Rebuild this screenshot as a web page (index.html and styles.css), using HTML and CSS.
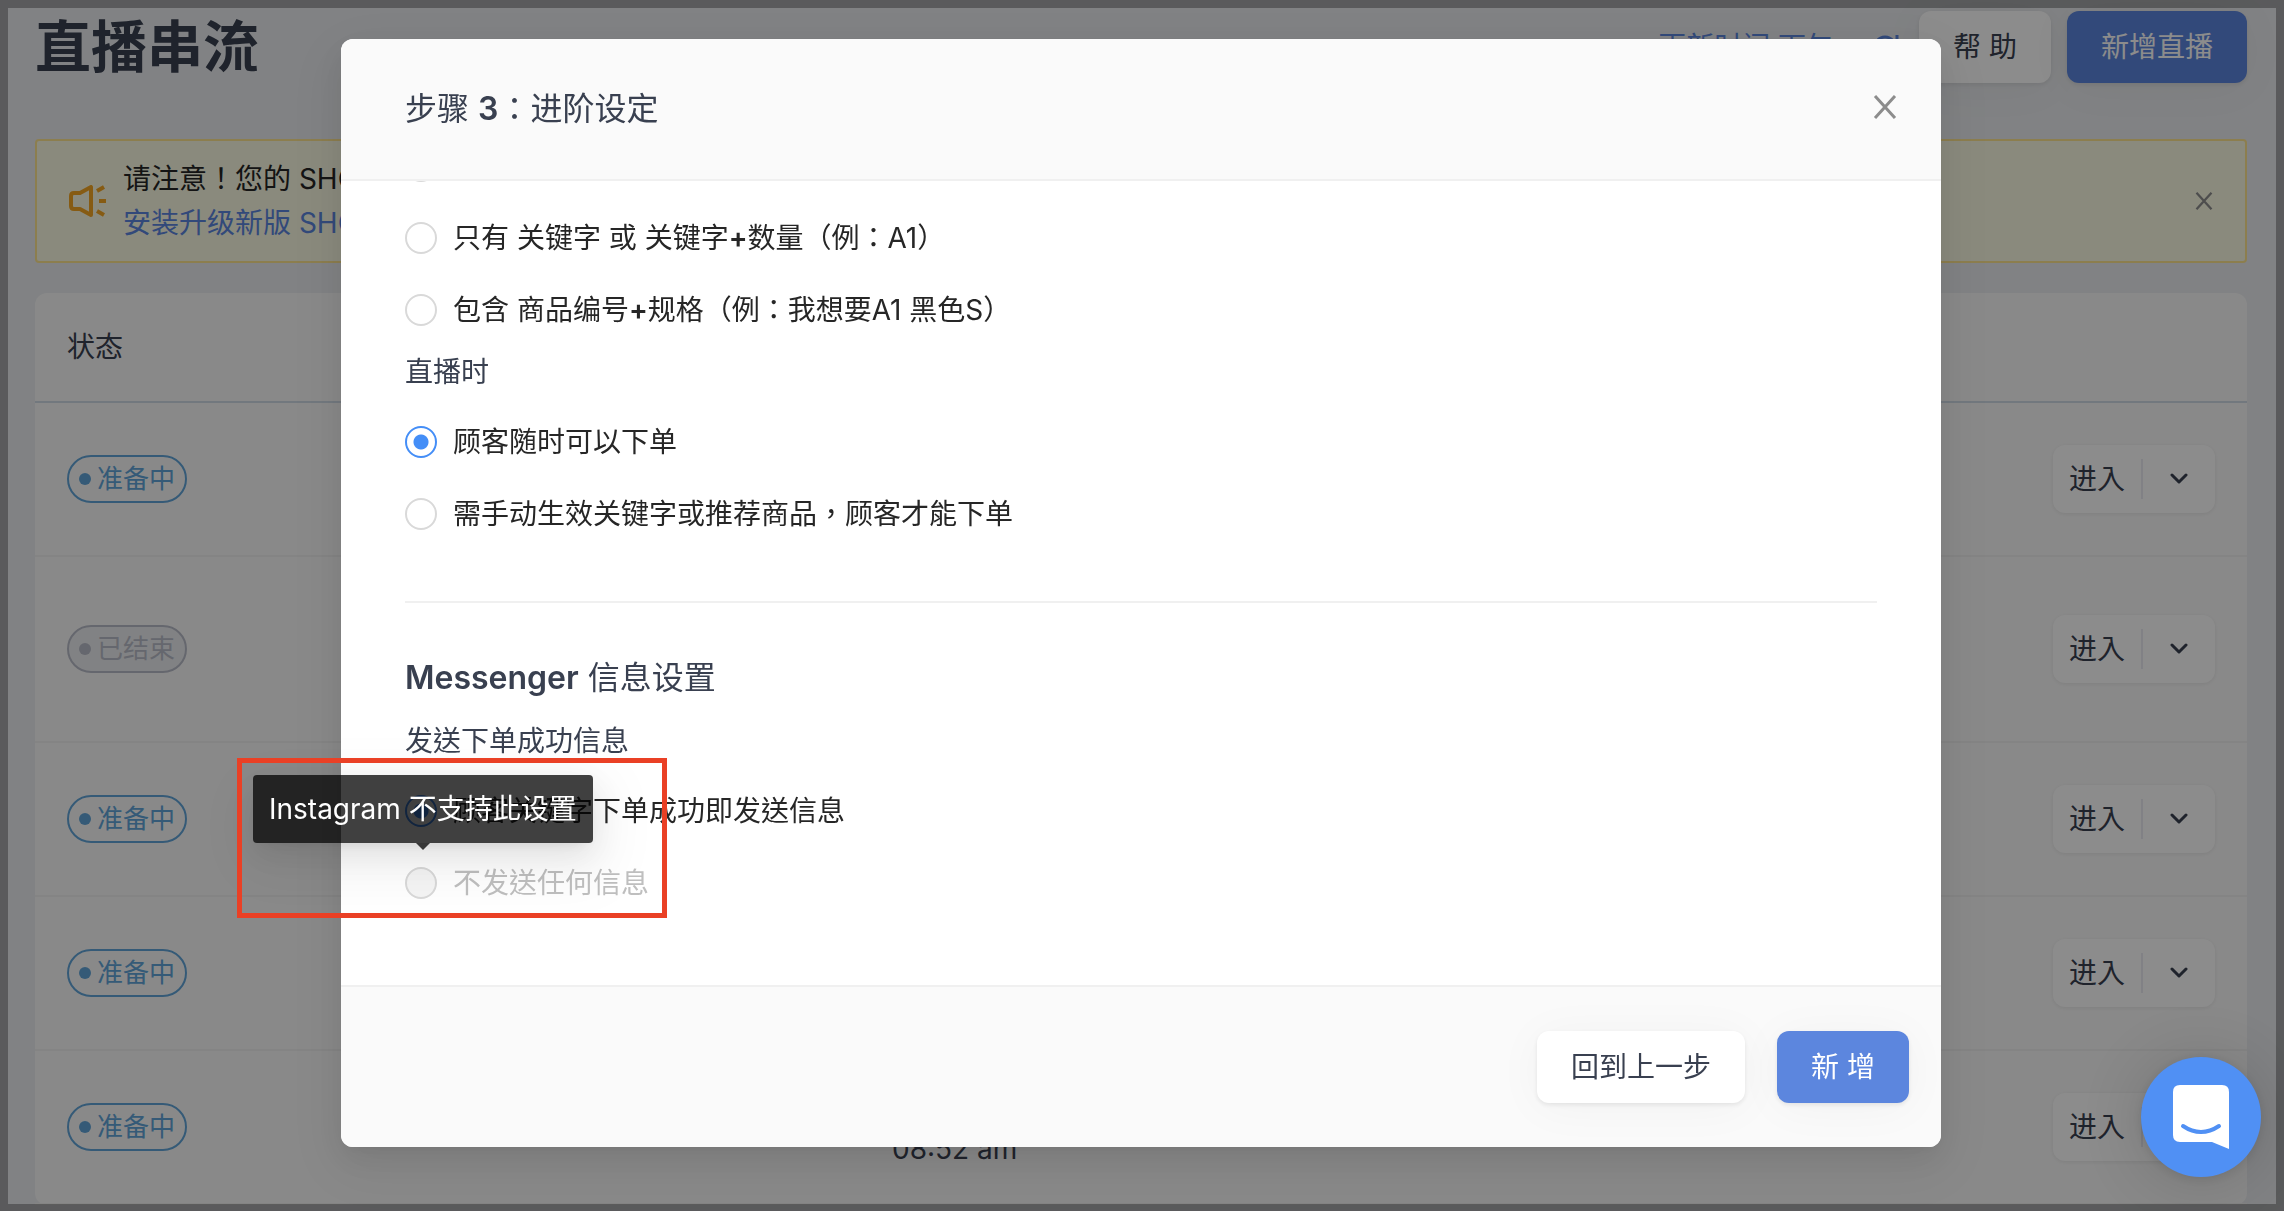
FILE: index.html
```
<!DOCTYPE html>
<html lang="zh-Hant">
<head>
  <meta charset="UTF-8">
  <title>直播串流</title>
  <link rel="stylesheet" href="styles.css">
</head>
<body>

<div class="page">
  <header class="topbar">
    <h1 class="title">直播串流</h1>
    <a class="updated" href="#">更新时间 下午
      <svg class="reload" viewBox="0 0 28 28"><path d="M21 8A10 10 0 1 0 23 15M25 2v9h-8"/></svg>
    </a>
    <button class="btn">帮 助</button>
    <button class="btn primary">新增直播</button>
  </header>

  <div class="notice">
    <svg class="horn" viewBox="0 0 38 32"><path d="M2 11q0-3 3-3h6L22 2v28L11 24H5q-3 0-3-3zM28 6l7-4M30 16h7M28 26l7 4"/></svg>
    <div class="notice-text">
      <div>请注意！您的 SHOPLINE</div>
      <a href="#">安装升级新版 SHOPLINE</a>
    </div>
    <button class="close small" aria-label="关闭"><svg viewBox="0 0 24 24"><path d="M2 1l20 22M22 1L2 23"/></svg></button>
  </div>

  <table class="streams">
    <thead>
      <tr><th>状态</th><th></th><th></th></tr>
    </thead>
    <tbody>
      <tr>
        <td><span class="tag">准备中</span></td>
        <td></td>
        <td><div class="split"><button>进入</button><button aria-label="更多"><svg viewBox="0 0 18 12"><path d="M2 2l7 7 7-7"/></svg></button></div></td>
      </tr>
      <tr class="tall">
        <td><span class="tag ended">已结束</span></td>
        <td></td>
        <td><div class="split"><button>进入</button><button aria-label="更多"><svg viewBox="0 0 18 12"><path d="M2 2l7 7 7-7"/></svg></button></div></td>
      </tr>
      <tr>
        <td><span class="tag">准备中</span></td>
        <td></td>
        <td><div class="split"><button>进入</button><button aria-label="更多"><svg viewBox="0 0 18 12"><path d="M2 2l7 7 7-7"/></svg></button></div></td>
      </tr>
      <tr>
        <td><span class="tag">准备中</span></td>
        <td></td>
        <td><div class="split"><button>进入</button><button aria-label="更多"><svg viewBox="0 0 18 12"><path d="M2 2l7 7 7-7"/></svg></button></div></td>
      </tr>
      <tr>
        <td><span class="tag">准备中</span></td>
        <td class="time">08:52 am</td>
        <td><div class="split"><button>进入</button><button aria-label="更多"><svg viewBox="0 0 18 12"><path d="M2 2l7 7 7-7"/></svg></button></div></td>
      </tr>
    </tbody>
  </table>
</div>

<div class="mask">
  <div class="modal" role="dialog" aria-labelledby="modal-title">
    <div class="modal-head">
      <h2 id="modal-title">步骤 <b>3</b>：进阶设定</h2>
      <button class="close" aria-label="关闭"><svg viewBox="0 0 24 24"><path d="M2 1l20 22M22 1L2 23"/></svg></button>
    </div>
    <div class="modal-body">
      <form class="scrolled">
        <label class="option"><input type="radio" name="match" aria-label="关键字"></label>
        <label class="option"><input type="radio" name="match"><span>只有 关键字 或 关键字<b>+</b>数量（例：A1）</span></label>
        <label class="option"><input type="radio" name="match"><span>包含 商品编号<b>+</b>规格（例：我想要A1 黑色S）</span></label>
        <p class="field">直播时</p>
        <label class="option"><input type="radio" name="live" checked><span>顾客随时可以下单</span></label>
        <label class="option"><input type="radio" name="live"><span>需手动生效关键字或推荐商品，顾客才能下单</span></label>
        <hr>
        <h2><b>Messenger</b> 信息设置</h2>
        <p class="field">发送下单成功信息</p>
        <label class="option"><input type="radio" name="message" checked><span>顾客关键字下单成功即发送信息</span></label>
        <label class="option"><input type="radio" name="message" disabled><span>不发送任何信息</span></label>
      </form>
    </div>
    <div class="modal-foot">
      <button class="btn">回到上一步</button>
      <button class="btn primary">新 增</button>
    </div>
    <div class="tooltip" role="tooltip">Instagram 不支持此设置</div>
    <div class="highlight"></div>
  </div>
</div>

<button class="chat" aria-label="聊天">
  <svg viewBox="0 0 56 64"><path fill="#fff" d="M7 0h42q7 0 7 7v57l-17-7H7q-7 0-7-7V7q0-7 7-7z"/><path fill="none" stroke="#5090f4" stroke-width="4" stroke-linecap="round" d="M10 41q18 12 36 0"/></svg>
</button>
<div class="frame"></div>

</body>
</html>
```
FILE: styles.css
```
* {
  box-sizing: border-box;
}
body {
  margin: 0;
  height: 100vh;
  overflow: hidden;
  background: #ebedf0;
  color: #394050;
  font: 28px/44px Inter, "Noto Sans CJK TC", sans-serif;
}
h1, h2, p {
  margin: 0;
}
h2 {
  font-size: 32px;
  line-height: 48px;
  font-weight: 400;
}
b {
  font-weight: 600;
}
a {
  color: #5c86de;
  text-decoration: none;
}
button {
  font: inherit;
  color: inherit;
  border: 0;
  padding: 0;
  background: none;
  cursor: pointer;
}
svg {
  display: block;
}
.page {
  padding: 11px 37px 0 35px;
}

/* top bar */
.topbar {
  display: flex;
  align-items: center;
  gap: 16px;
  height: 72px;
}
.title {
  font-size: 56px;
  font-weight: 700;
  line-height: 72px;
  margin-right: auto;
}
.updated {
  display: flex;
  align-items: center;
  gap: 68px;
  gap: 38px;
  margin-right: 3px;
}
.reload {
  width: 28px;
  height: 28px;
  fill: none;
  stroke: #5c86de;
  stroke-width: 3;
}
.btn {
  height: 72px;
  padding: 0 34px;
  border-radius: 12px;
  background: #fff;
  box-shadow: 0 2px 4px rgba(0, 0, 0, .08), 0 4px 48px rgba(0, 0, 0, .04);
}
.btn.primary {
  background: #5c86de;
  color: #fff;
}

/* notice */
.notice {
  display: flex;
  align-items: center;
  gap: 16px;
  height: 124px;
  margin: 56px 0 30px;
  padding: 0 32px;
  border: 2px solid #ffe58f;
  border-radius: 4px;
  background: #fbfbe4;
  color: #262626;
}
.notice-text {
  flex: 1;
}
.notice-text a {
  display: block;
}
.horn {
  width: 38px;
  height: 32px;
  fill: none;
  stroke: #f5a623;
  stroke-width: 4;
  stroke-linejoin: round;
}
.close svg {
  width: 24px;
  height: 24px;
  fill: none;
  stroke: #8c8c8c;
  stroke-width: 3;
}
.close.small svg {
  width: 18px;
  height: 18px;
}

/* stream list */
.streams {
  width: 100%;
  border-spacing: 0;
  border-radius: 12px;
  background: #fafafa;
  table-layout: fixed;
}
.streams th {
  height: 110px;
  padding: 0 32px;
  font-weight: 400;
  text-align: left;
  border-bottom: 2px solid #d0dbe6;
}
.streams th:first-child {
  width: 714px;
}
.streams td {
  height: 154px;
  padding: 0 32px;
  border-bottom: 2px solid #f0f0f0;
}
.streams .tall td {
  height: 186px;
}
.streams .time {
  padding: 44px 0 0 143px;
}
.tag {
  display: inline-flex;
  align-items: center;
  gap: 6px;
  height: 48px;
  padding: 0 10px;
  border: 2px solid #61a5d9;
  border-radius: 24px;
  color: #61a5d9;
  font-size: 26px;
  vertical-align: middle;
}
.tag::before {
  content: "";
  width: 12px;
  height: 12px;
  border-radius: 50%;
  background: #61a5d9;
}
.tag.ended {
  border-color: #b9bcc8;
  color: #b9bcc8;
  background: #ebedf0;
}
.tag.ended::before {
  background: #b9bcc8;
}
.split {
  display: flex;
  align-items: center;
  width: 162px;
  height: 68px;
  margin-left: auto;
  border-radius: 12px;
  background: #fff;
  box-shadow: 0 1px 4px rgba(0, 0, 0, .08);
}
.split button {
  flex: 1;
  height: 40px;
  line-height: 40px;
}
.split button:first-child {
  flex: 0 0 90px;
  border-right: 2px solid #ebebf2;
}
.split svg {
  width: 18px;
  height: 12px;
  margin: auto;
  fill: none;
  stroke: #394050;
  stroke-width: 3;
  stroke-linecap: round;
  stroke-linejoin: round;
}

/* modal */
.mask {
  position: fixed;
  inset: 0;
  display: flex;
  justify-content: center;
  align-items: flex-start;
  padding-top: 39px;
  background: rgba(0, 0, 0, .45);
}
.modal {
  position: relative;
  width: 90%;
  max-width: 1600px;
  margin-right: 2px;
  border-radius: 12px;
  background: #fff;
  box-shadow: 0 6px 12px -8px rgba(0, 0, 0, .12), 0 12px 32px rgba(0, 0, 0, .08), 0 18px 56px 16px rgba(0, 0, 0, .05);
}
.modal-head {
  display: flex;
  align-items: center;
  justify-content: space-between;
  height: 142px;
  padding: 0 44px 0 64px;
  border-bottom: 2px solid #f0f0f0;
  border-radius: 12px 12px 0 0;
  background: #fafafa;
}
.modal-head .close {
  padding-bottom: 4px;
}
.modal-body {
  padding: 0 64px 66px;
  overflow: hidden;
}
.scrolled {
  margin-top: -51px;
}
.option {
  display: flex;
  align-items: center;
  gap: 16px;
  height: 72px;
  color: #262626;
}
.option input {
  appearance: none;
  width: 32px;
  height: 32px;
  margin: 0;
  border: 2px solid #d9d9d9;
  border-radius: 50%;
  background: #fff;
}
.option input:checked {
  border-color: #448ef7;
  background: radial-gradient(#448ef7 7px, #fff 8px);
}
.option input:disabled {
  background: #f5f5f5;
}
.option input:disabled + span {
  color: #bfbfbf;
}
.field {
  padding: 4px 0 12px;
}
hr {
  height: 2px;
  margin: 51px 0;
  border: 0;
  background: #f0f0f0;
}
.scrolled h2 {
  margin-bottom: 13px;
}
.modal-foot {
  display: flex;
  align-items: center;
  justify-content: flex-end;
  gap: 32px;
  height: 162px;
  padding: 0 32px;
  border-top: 2px solid #f0f0f0;
  border-radius: 0 0 12px 12px;
  background: #fafafa;
}

/* over the modal */
.tooltip {
  position: absolute;
  left: -88px;
  bottom: 304px;
  padding: 12px 16px;
  border-radius: 4px;
  background: rgba(0, 0, 0, .75);
  color: #fff;
  white-space: nowrap;
  box-shadow: 0 6px 12px -8px rgba(0, 0, 0, .12), 0 12px 32px rgba(0, 0, 0, .08), 0 18px 56px 16px rgba(0, 0, 0, .05);
}
.tooltip::after {
  content: "";
  position: absolute;
  left: 50%;
  top: 100%;
  margin-left: -7px;
  border: 7px solid transparent;
  border-top-color: rgba(0, 0, 0, .75);
  border-bottom: 0;
}
.highlight {
  position: absolute;
  left: -104px;
  bottom: 229px;
  width: 430px;
  height: 160px;
  border: 5px solid #ea4025;
}
.chat {
  position: fixed;
  right: 23px;
  bottom: 34px;
  width: 120px;
  height: 120px;
  border-radius: 50%;
  background: #5090f4;
  box-shadow: 0 2px 12px rgba(0, 0, 0, .1), 0 4px 64px rgba(0, 0, 0, .16);
}
.chat svg {
  width: 56px;
  height: 64px;
  margin: auto;
}
.frame {
  position: fixed;
  inset: 0;
  border: 8px solid rgba(0, 0, 0, .3);
  border-bottom-width: 7px;
  pointer-events: none;
}
```
